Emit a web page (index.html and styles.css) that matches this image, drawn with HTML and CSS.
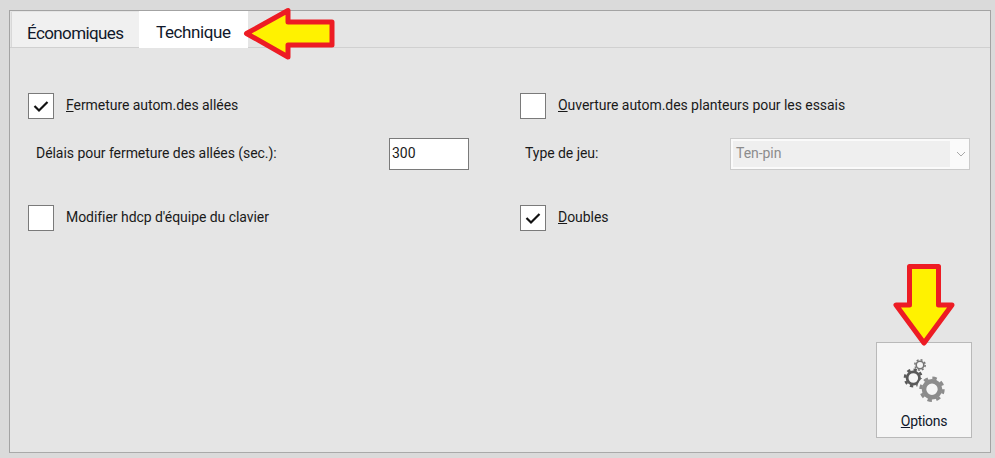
FILE: index.html
```html
<!DOCTYPE html>
<html lang="fr">
<head>
    <meta charset="UTF-8">
    <title>Options - Technique</title>
    <link rel="stylesheet" href="styles.css">
</head>
<body>
    <div class="panel">
        <div class="tabs">
            <div class="tab">Économiques</div>
            <div class="tab active">Technique</div>
        </div>
        <div class="content">
            <div class="settings">
                <div class="check-row">
                    <span class="box"><svg viewBox="0 0 24 24" width="24" height="24"><path d="M5.5 12 L10 16.5 L18.5 8" fill="none" stroke="#111" stroke-width="2.2"/></svg></span>
                    <span class="label"><u>F</u>ermeture autom.des allées</span>
                </div>
                <div class="check-row">
                    <span class="box"></span>
                    <span class="label"><u>O</u>uverture autom.des planteurs pour les essais</span>
                </div>
                <div class="field-row">
                    <span class="field-label">Délais pour fermeture des allées (sec.):</span>
                    <input class="text-input" type="text" value="300">
                </div>
                <div class="field-row field-row-right">
                    <span class="field-label">Type de jeu:</span>
                    <div class="select">
                        <span class="select-value">Ten-pin</span>
                        <svg class="chevron" viewBox="0 0 10 6" width="10" height="6"><path d="M1 1 L5 5 L9 1" fill="none" stroke="#a8a8a8" stroke-width="1"/></svg>
                    </div>
                </div>
                <div class="check-row">
                    <span class="box"></span>
                    <span class="label">Modifier hdcp d'équipe du clavier</span>
                </div>
                <div class="check-row">
                    <span class="box"><svg viewBox="0 0 24 24" width="24" height="24"><path d="M5.5 12 L10 16.5 L18.5 8" fill="none" stroke="#111" stroke-width="2.2"/></svg></span>
                    <span class="label"><u>D</u>oubles</span>
                </div>
            </div>
            <div class="actions">
                <button class="options-btn" type="button">
                    <svg class="gears" viewBox="0 0 44 44" width="44" height="44">
                        <!-- small gear -->
                        <circle cx="18" cy="7" r="3.8" fill="none" stroke="#757575" stroke-width="1.6"/>
                        <circle cx="18" cy="7" r="5.2" fill="none" stroke="#757575" stroke-width="1.5" stroke-dasharray="2 2.08"/>
                        <!-- middle gear -->
                        <circle cx="11.3" cy="20" r="6.2" fill="none" stroke="#595959" stroke-width="2.8"/>
                        <circle cx="11.3" cy="20" r="8.4" fill="none" stroke="#595959" stroke-width="2.4" stroke-dasharray="3.3 3.3"/>
                        <!-- big gear -->
                        <circle cx="30" cy="31.3" r="15" fill="#f5f5f5"/>
                        <circle cx="30" cy="31.3" r="8" fill="none" stroke="#8c8c8c" stroke-width="4.6"/>
                        <circle cx="30" cy="31.3" r="11.2" fill="none" stroke="#8c8c8c" stroke-width="3" stroke-dasharray="4.4 4.4"/>
                    </svg>
                    <span><u>O</u>ptions</span>
                </button>
            </div>
        </div>
    </div>

    <svg class="arrow arrow-tab" viewBox="0 0 100 60" width="100" height="60">
        <path d="M6.5 28.5 L48 5.5 L48 17 L92 17 L92 40 L48 40 L48 52 Z" fill="#fff200" stroke="#ed1c24" stroke-width="5" stroke-linejoin="round"/>
    </svg>
    <svg class="arrow arrow-options" viewBox="0 0 70 90" width="70" height="90">
        <path d="M19.5 4.5 L48.5 4.5 L48.5 43 L62 43 L34 81 L6 43 L19.5 43 Z" fill="#fff200" stroke="#ed1c24" stroke-width="5" stroke-linejoin="round"/>
    </svg>
</body>
</html>
```
FILE: styles.css
```css
body {
    margin: 0;
    height: 458px;
    overflow: hidden;
    background-color: #dadada;
    font-family: 'Roboto', 'Liberation Sans', sans-serif;
    font-size: 14px;
    letter-spacing: -0.05px;
    color: #1a1a1a;
    position: relative;
}
.panel {
    box-sizing: border-box;
    width: 982px;
    height: 443px;
    margin: 10px 0 0 9px;
    border: 1px solid #a3a3a3;
    border-bottom-color: #a9a9a9;
    background-color: #e5e5e5;
    display: flex;
    flex-direction: column;
}
.tabs {
    display: flex;
    height: 37px;
    padding-left: 1px;
    border-bottom: 1px solid #d0d0d0;
    box-sizing: border-box;
    flex: none;
}
.tab {
    width: 128px;
    margin-top: 1px;
    font-size: 17px;
    letter-spacing: -0.6px;
    line-height: 42px;
    padding-left: 15px;
    box-sizing: border-box;
    background-color: #f0f0f0;
    border-left: 1px solid #d8d8d8;
    color: #10182b;
}
.tab.active {
    width: 109px;
    margin-top: 0;
    padding-left: 17px;
    letter-spacing: -0.4px;
    line-height: 42px;
    background-color: #fff;
    border-left: none;
    height: 37px;
}
.content {
    flex: 1;
    display: flex;
    flex-direction: column;
    padding: 45px 18px 14px 18px;
}
.settings {
    display: grid;
    grid-template-columns: 441px 450px;
    column-gap: 51px;
}
.check-row {
    display: flex;
    align-items: center;
    gap: 12px;
    height: 26px;
}
.box {
    box-sizing: border-box;
    width: 26px;
    height: 26px;
    border: 1px solid #7a7a7a;
    background-color: #fff;
    flex: none;
}
.box svg {
    display: block;
}
.label {
    white-space: nowrap;
    margin-top: -2px;
}
.field-row {
    display: flex;
    align-items: center;
    justify-content: space-between;
    height: 32px;
    margin: 19px 0 35px;
    padding-left: 8px;
}
.field-row-right {
    padding-left: 5px;
}
.field-label {
    margin-top: -2px;
}
.text-input {
    box-sizing: border-box;
    width: 80px;
    height: 32px;
    padding: 0 2px 3px;
    border: 1px solid #7a7a7a;
    background-color: #fff;
    font-family: inherit;
    font-size: 14px;
    color: #1a1a1a;
    outline: none;
}
.select {
    box-sizing: border-box;
    width: 240px;
    height: 32px;
    padding: 2px;
    border: 1px solid #cbcbcb;
    background-color: #fafafa;
    display: flex;
    align-items: center;
}
.select-value {
    width: 217px;
    height: 26px;
    line-height: 24px;
    padding-left: 3px;
    box-sizing: border-box;
    background-color: #efefef;
    color: #8c8c8c;
}
.chevron {
    margin-left: 6px;
}
.actions {
    margin-top: auto;
    display: flex;
    justify-content: flex-end;
}
.options-btn {
    box-sizing: border-box;
    width: 96px;
    height: 96px;
    border: 1px solid #b9b9b9;
    background-color: #f5f5f5;
    font-family: inherit;
    font-size: 14px;
    letter-spacing: -0.3px;
    color: #10182b;
    padding: 15px 0 0;
    display: flex;
    flex-direction: column;
    align-items: center;
    justify-content: flex-start;
    gap: 11px;
}
.gears {
    display: block;
}
.arrow {
    position: absolute;
}
.arrow-tab {
    left: 240px;
    top: 5px;
}
.arrow-options {
    left: 890px;
    top: 262px;
}
```
